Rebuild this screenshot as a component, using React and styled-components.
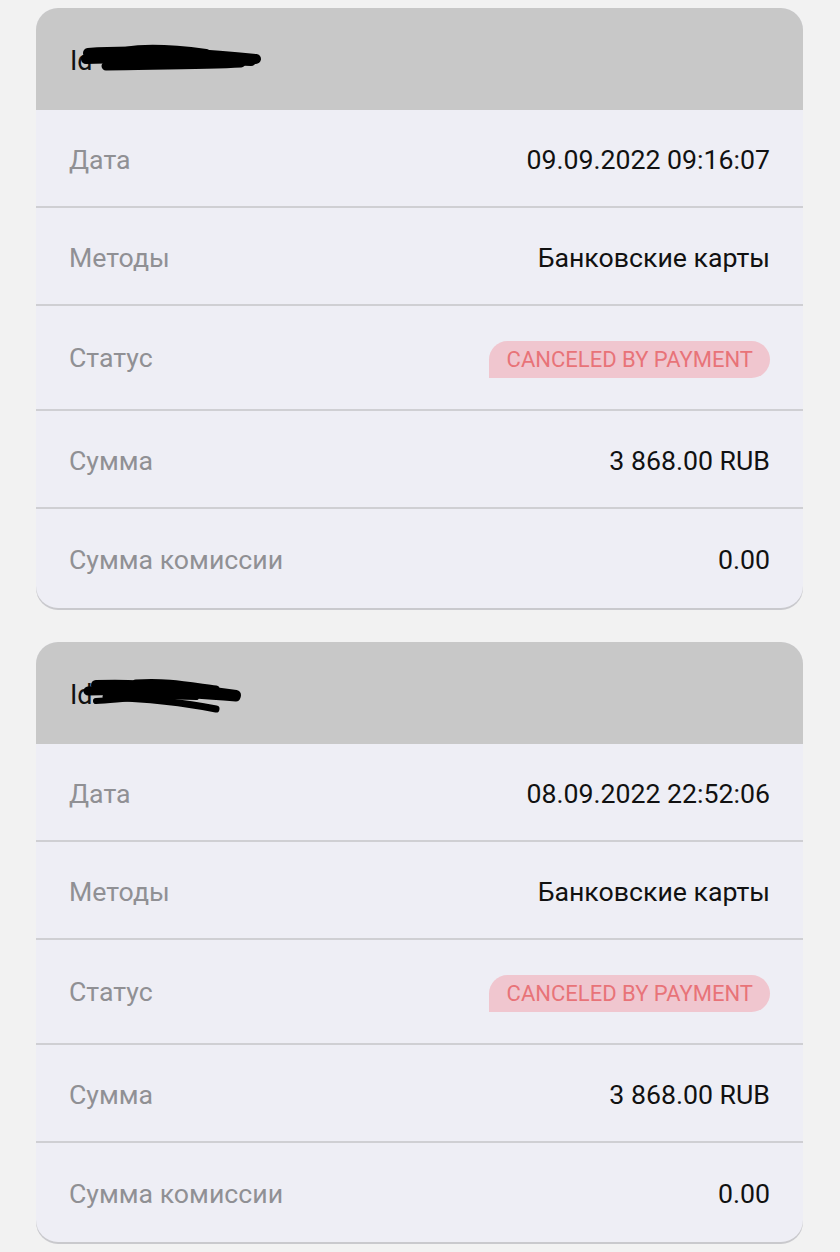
import styled, { createGlobalStyle } from "styled-components";

const GlobalStyle = createGlobalStyle`
  body {
    margin: 0;
    background: #f2f2f2;
    font-family: Roboto, "Noto Sans", sans-serif;
  }
`;

const payments = [
  {
    id: 1,
    date: "09.09.2022 09:16:07",
    method: "Банковские карты",
    status: "CANCELED BY PAYMENT",
    amount: "3 868.00 RUB",
    fee: "0.00",
    scribble: "a",
  },
  {
    id: 2,
    date: "08.09.2022 22:52:06",
    method: "Банковские карты",
    status: "CANCELED BY PAYMENT",
    amount: "3 868.00 RUB",
    fee: "0.00",
    scribble: "b",
  },
];

// закрашенный маркером номер
const Scribble = ({ variant }) =>
  variant === "a" ? (
    <svg width="190" height="40" viewBox="0 0 190 40">
      <g stroke="#000" strokeLinecap="round" fill="none">
        <path d="M12 12 C60 8 120 12 180 18" strokeWidth="10" />
        <path d="M10 18 C60 16 120 18 175 20" strokeWidth="10" />
        <path d="M30 25 C80 24 130 24 165 22" strokeWidth="9" />
        <path d="M50 10 C70 6 100 8 130 12" strokeWidth="8" />
      </g>
    </svg>
  ) : (
    <svg width="170" height="44" viewBox="0 0 170 44">
      <g stroke="#000" strokeLinecap="round" fill="none">
        <path d="M20 10 C70 8 120 14 160 20" strokeWidth="10" />
        <path d="M12 16 C60 14 110 18 160 22" strokeWidth="9" />
        <path d="M30 22 C80 24 120 30 140 34" strokeWidth="7" />
        <path d="M20 26 C50 24 80 20 120 22" strokeWidth="6" />
        <path d="M60 8 C90 6 110 10 140 14" strokeWidth="7" />
      </g>
    </svg>
  );

const App = () => (
  <>
    <GlobalStyle />
    <List>
      {payments.map((p) => (
        <Card key={p.id}>
          <Header>
            <IdText>Id</IdText>
            <ScribbleWrap>
              <Scribble variant={p.scribble} />
            </ScribbleWrap>
          </Header>
          <Row>
            <Label>Дата</Label>
            <Value>{p.date}</Value>
          </Row>
          <Row>
            <Label>Методы</Label>
            <Value>{p.method}</Value>
          </Row>
          <Row tall>
            <Label>Статус</Label>
            <Badge>{p.status}</Badge>
          </Row>
          <Row>
            <Label>Сумма</Label>
            <Value>{p.amount}</Value>
          </Row>
          <Row last>
            <Label>Сумма комиссии</Label>
            <Value>{p.fee}</Value>
          </Row>
        </Card>
      ))}
    </List>
  </>
);

const List = styled.div`
  display: flex;
  flex-direction: column;
  gap: 34px;
  padding: 8px 37px 10px 36px;
`;

const Card = styled.div`
  background: #eeeef5;
  border-radius: 22px;
  overflow: hidden;
  box-shadow: 0 2px 0 #c9c9cd;
`;

const Header = styled.div`
  height: 102px;
  background: #c8c8c8;
  display: flex;
  align-items: center;
  padding: 4px 0 0 34px;
  box-sizing: border-box;
  position: relative;
`;

const IdText = styled.span`
  font-size: 27px;
  color: #111;
`;

const ScribbleWrap = styled.span`
  position: absolute;
  left: 40px;
  top: 33px;
  display: flex;
`;

const Row = styled.div`
  height: ${(p) => (p.tall ? 105 : 98)}px;
  box-sizing: border-box;
  display: flex;
  align-items: center;
  justify-content: space-between;
  padding: ${(p) => (p.tall ? 0 : 3)}px 33px 0;
  border-bottom: ${(p) => (p.last ? "none" : "2px solid #cfcfd3")};
  &:last-child {
    height: 99px;
  }
`;

const Label = styled.span`
  font-size: 26.7px;
  color: #909094;
`;

const Value = styled.span`
  font-size: 26.7px;
  color: #111;
`;

const Badge = styled.span`
  background: #f0c6cf;
  color: #e87378;
  font-size: 22px;
  height: 37px;
  display: flex;
  align-items: center;
  padding: 0 17px 0 18px;
  border-radius: 19px 19px 19px 0;
  margin-top: 3px;
`;

export default App;
